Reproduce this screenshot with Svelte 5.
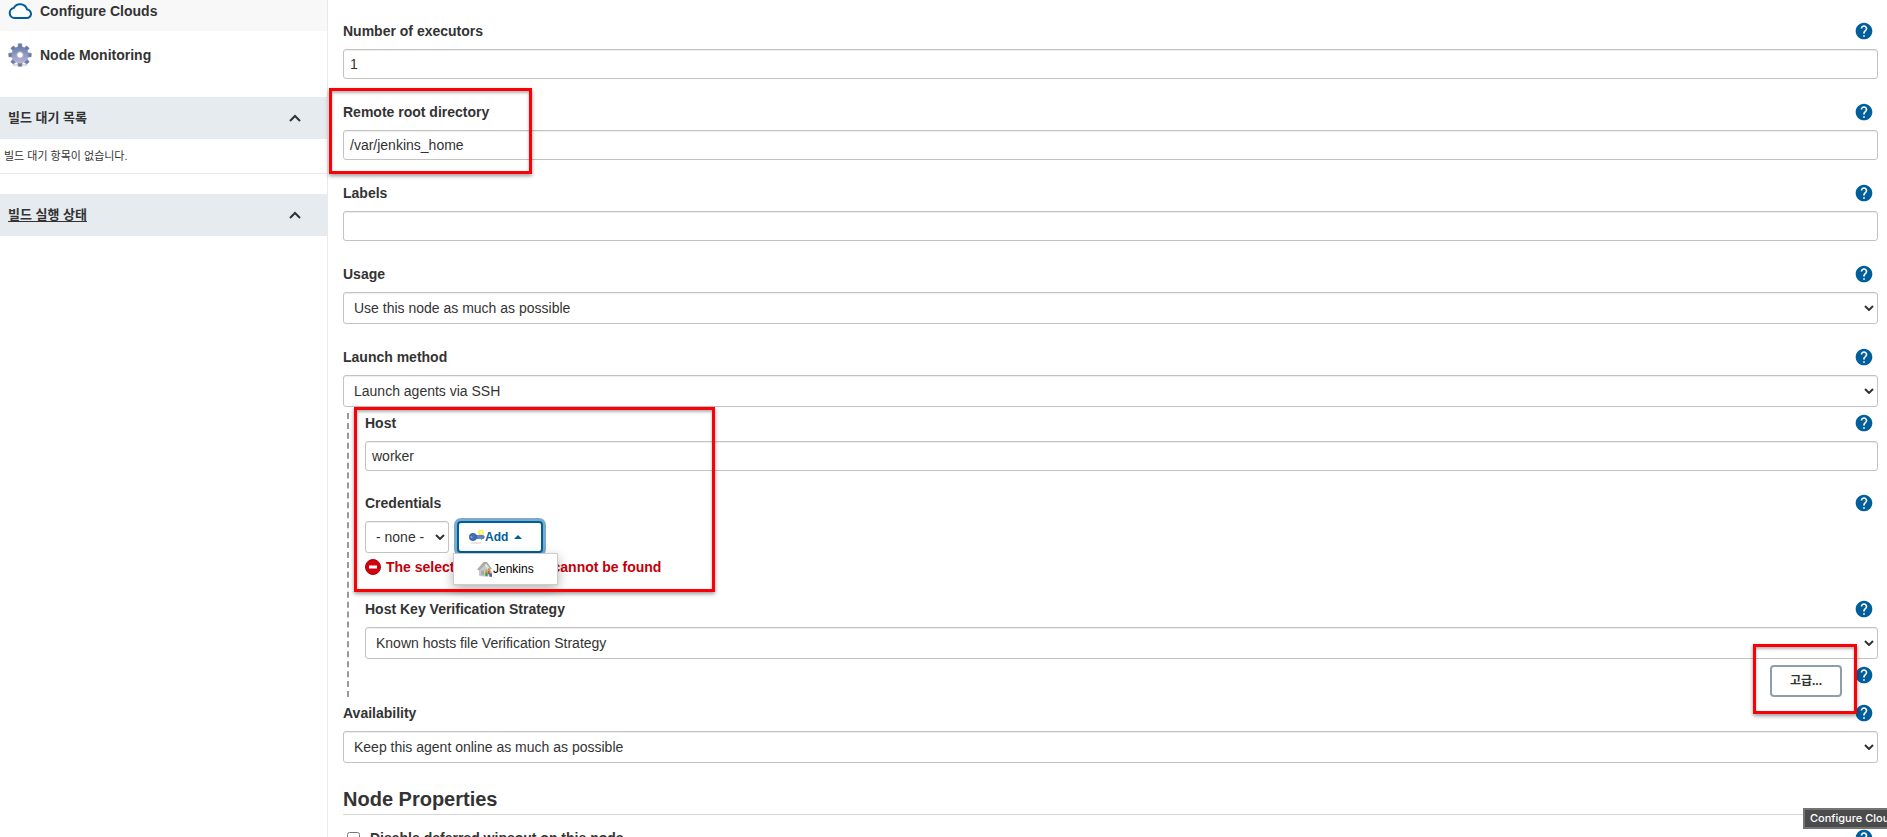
<script lang="ts">
	let executors = $state('1');
	let remoteRoot = $state('/var/jenkins_home');
	let labels = $state('');
	let usage = $state('normal');
	let launcher = $state('ssh');
	let host = $state('worker');
	let credentials = $state('none');
	let strategy = $state('known');
	let availability = $state('always');
	let disableWipeout = $state(false);
	let menuOpen = $state(true);
	let showQueue = $state(true);
	let showExecutors = $state(true);

	const teeth = [0, 45, 90, 135, 180, 225, 270, 315];
</script>

{#snippet help(name: string)}
	<button class="help" type="button" aria-label="Help for feature: {name}">
		<svg viewBox="0 0 24 24" width="20" height="20">
			<path
				fill="#005f9b"
				d="M12 2C6.48 2 2 6.48 2 12s4.48 10 10 10 10-4.48 10-10S17.52 2 12 2zm1 17h-2v-2h2v2zm2.07-7.75l-.9.92C13.45 12.9 13 13.5 13 15h-2v-.5c0-1.1.45-2.1 1.17-2.83l1.24-1.26c.37-.36.59-.86.59-1.41 0-1.1-.9-2-2-2s-2 .9-2 2H8c0-2.21 1.79-4 4-4s4 1.79 4 4c0 .88-.36 1.68-.93 2.25z"
			/>
		</svg>
	</button>
{/snippet}

{#snippet head(id: string, text: string)}
	<div class="head">
		<label for={id}>{text}</label>
		{@render help(text)}
	</div>
{/snippet}

{#snippet chevron()}
	<svg viewBox="0 0 12 8" width="12" height="8">
		<path d="M1 7l5-5 5 5" fill="none" stroke="#333" stroke-width="2" />
	</svg>
{/snippet}

<div class="page">
	<aside>
		<nav>
			<a class="task active" href="#clouds">
				<svg viewBox="0 0 24 24" width="24" height="24">
					<path
						d="M6.500 19h12a4.200 4.200 0 0 0 .6-8.400A7.200 7.200 0 0 0 5.800 9 5.050 5.050 0 0 0 6.500 19z"
						fill="#fff"
						stroke="#005f9b"
						stroke-width="2"
						stroke-linejoin="round"
					/>
				</svg>
				Configure Clouds
			</a>
			<a class="task" href="#monitoring">
				<svg viewBox="0 0 24 24" width="24" height="24">
					<defs>
						<linearGradient id="gear" x1="0" y1="0" x2="0" y2="24" gradientUnits="userSpaceOnUse">
							<stop offset="0" stop-color="#5871a5" />
							<stop offset="1" stop-color="#c9c4e0" />
						</linearGradient>
					</defs>
					<ellipse cx="12" cy="22" rx="8" ry="1.500" fill="#ddd" />
					<g fill="url(#gear)" stroke="#8583a6" stroke-width=".7">
						{#each teeth as angle (angle)}
							<path d="M9.800 6L10.300 .8h3.400L14.200 6z" transform="rotate({angle} 12 12)" />
						{/each}
					</g>
					<circle cx="12" cy="12" r="6" fill="none" stroke="url(#gear)" stroke-width="5" />
					<circle cx="12" cy="12" r="3.300" fill="#fff" stroke="#75759c" stroke-width=".7" />
				</svg>
				Node Monitoring
			</a>
		</nav>

		<section class="pane">
			<div class="pane-head">
				<span>빌드 대기 목록</span>
				<button type="button" aria-label="접기" onclick={() => (showQueue = !showQueue)}>
					{@render chevron()}
				</button>
			</div>
			{#if showQueue}
				<p>빌드 대기 항목이 없습니다.</p>
			{/if}
		</section>
		<section class="pane">
			<div class="pane-head">
				<a href="#computer">빌드 실행 상태</a>
				<button type="button" aria-label="접기" onclick={() => (showExecutors = !showExecutors)}>
					{@render chevron()}
				</button>
			</div>
		</section>
	</aside>

	<main>
		<div class="field">
			{@render head('executors', 'Number of executors')}
			<input id="executors" type="text" bind:value={executors} />
		</div>
		<div class="field">
			{@render head('remote', 'Remote root directory')}
			<input id="remote" type="text" bind:value={remoteRoot} />
			<div class="mark mark-remote"></div>
		</div>
		<div class="field">
			{@render head('labels', 'Labels')}
			<input id="labels" type="text" bind:value={labels} />
		</div>
		<div class="field">
			{@render head('usage', 'Usage')}
			<select id="usage" bind:value={usage}>
				<option value="normal">Use this node as much as possible</option>
				<option value="exclusive">Only build jobs with label expressions matching this node</option>
			</select>
		</div>
		<div class="field">
			{@render head('launcher', 'Launch method')}
			<select id="launcher" bind:value={launcher}>
				<option value="ssh">Launch agents via SSH</option>
			</select>
		</div>

		<div class="nested">
			<div class="field">
				{@render head('host', 'Host')}
				<input id="host" type="text" bind:value={host} />
				<div class="mark mark-host"></div>
			</div>
			<div class="field">
				{@render head('credentials', 'Credentials')}
				<div class="credentials">
					<select id="credentials" bind:value={credentials}>
						<option value="none">- none -</option>
					</select>
					<div class="add-wrap">
						<button class="add" type="button" onclick={() => (menuOpen = !menuOpen)}>
							<svg viewBox="0 0 16 16" width="16" height="16">
								<ellipse cx="7" cy="14" rx="6" ry="1" fill="#e4e4e4" />
								<circle cx="12" cy="3.500" r="2.800" fill="#f8ee4a" />
								<circle cx="12" cy="3.500" r="1.200" fill="#fffbc0" />
								<path d="M6 6.500h8.500l1 1.500-1 1.500h-1l-1 1-1-1H6z" fill="#5c86c8" stroke="#33589c" stroke-width=".6" />
								<circle cx="4" cy="8" r="3.700" fill="#3f6fb8" stroke="#2d5394" stroke-width=".6" />
								<circle cx="2.500" cy="8" r="1" fill="#7fa3d8" />
							</svg>
							Add
							<svg class="caret" viewBox="0 0 8 4" width="8" height="4">
								<path d="M0 4l4-4 4 4z" fill="#005f9b" />
							</svg>
						</button>
						{#if menuOpen}
							<div class="menu">
								<button type="button">
									<svg viewBox="0 0 16 16" width="16" height="16">
										<path d="M2.500 8v6.500l8 1V8L7 3z" fill="#c9c9c6" stroke="#aaa" stroke-width=".5" />
										<path d="M0 8.500L6.500 1l3.500 0 5 7-1.500.5L9 3 2 9.500z" fill="#a9aba7" />
										<path d="M9 3l5 6v5l-3.500 1.500V7z" fill="#dededb" />
										<path d="M4 9.500h3V14H4z" fill="#aaa" />
										<circle cx="9.500" cy="10" r="1.200" fill="#c99b4b" />
										<path d="M8.300 11.300h2.400V15H8.300z" fill="#4c9a3b" />
										<circle cx="12" cy="8.500" r="1.200" fill="#c88b50" />
										<path d="M11 9.800h2.300v3.400H11z" fill="#cf4b3f" />
										<circle cx="13.500" cy="11" r="1.200" fill="#e1b04d" />
										<path d="M12.300 12.300h2.700v3.500h-2.700z" fill="#3d68b4" />
									</svg>
									Jenkins
								</button>
							</div>
						{/if}
					</div>
				</div>
				<div class="error">
					<svg viewBox="0 0 16 16" width="16" height="16">
						<circle cx="8" cy="8" r="7.500" fill="#d3000d" stroke="#a9000b" />
						<path d="M4 6.500h8v3H4z" fill="#fff" />
					</svg>
					The selected credentials cannot be found
				</div>
			</div>
			<div class="field">
				{@render head('strategy', 'Host Key Verification Strategy')}
				<select id="strategy" bind:value={strategy}>
					<option value="known">Known hosts file Verification Strategy</option>
				</select>
			</div>
			<div class="advanced">
				<div class="advanced-wrap">
					<button class="advanced-button" type="button">고급...</button>
					<div class="mark mark-advanced"></div>
				</div>
				{@render help('Advanced')}
			</div>
		</div>

		<div class="field">
			{@render head('availability', 'Availability')}
			<select id="availability" bind:value={availability}>
				<option value="always">Keep this agent online as much as possible</option>
			</select>
		</div>

		<h2>Node Properties</h2>
		<div class="head property">
			<label>
				<input type="checkbox" bind:checked={disableWipeout} />
				Disable deferred wipeout on this node
			</label>
			{@render help('Disable deferred wipeout on this node')}
		</div>
	</main>

	<div class="tooltip" role="tooltip">Configure Clouds</div>
</div>

<style>
	:global(body) {
		margin: 0;
		background: #fff;
		color: #333;
		font-family: 'Liberation Sans', 'Noto Sans CJK KR', sans-serif;
		font-size: 14px;
		line-height: 20px;
	}
	.page {
		position: relative;
		display: grid;
		grid-template-columns: 328px 1fr;
		height: 100vh;
		overflow: hidden;
	}
	button,
	input,
	select {
		box-sizing: border-box;
		margin: 0;
		font: inherit;
		color: inherit;
	}
	svg {
		display: block;
		flex: none;
	}
	aside {
		margin-top: -9px;
		border-right: 1px solid #eaeaea;
		box-sizing: border-box;
	}
	nav {
		display: grid;
		gap: 4px;
		margin-bottom: 22px;
	}
	.task {
		display: flex;
		align-items: center;
		gap: 8px;
		height: 40px;
		padding-left: 8px;
		color: #333;
		font-weight: 700;
		text-decoration: none;
	}
	.task.active {
		background: #f8f8f8;
	}
	.pane {
		margin-bottom: 20px;
	}
	.pane-head {
		display: flex;
		align-items: center;
		justify-content: space-between;
		height: 42px;
		padding: 0 24px 0 8px;
		background: #e6ebef;
		font-size: 13px;
		font-weight: 700;
	}
	.pane-head a {
		color: inherit;
		text-underline-offset: 2px;
	}
	.pane-head button {
		padding: 2px;
		border: 0;
		background: none;
	}
	.pane p {
		margin: 0;
		padding: 7px 4px;
		border-bottom: 1px solid #e6ebef;
		font-size: 11px;
	}
	main {
		min-width: 0;
		padding: 21px 9px 0 15px;
	}
	.field {
		position: relative;
		margin-bottom: 23px;
	}
	.head {
		display: flex;
		align-items: center;
		justify-content: space-between;
		height: 20px;
		margin-bottom: 8px;
		padding-right: 4px;
	}
	.head label {
		font-weight: 700;
	}
	.help {
		padding: 0;
		border: 0;
		background: none;
	}
	input[type='text'],
	select {
		display: block;
		width: 100%;
		height: 30px;
		padding: 0 6px;
		border: 1px solid #c3c3c3;
		border-radius: 3px;
		background: #fff;
		box-shadow: inset 0 1px 1px #eee;
	}
	select {
		height: 32px;
		padding: 0 20px 0 10px;
		appearance: none;
		background: #fff
			url("data:image/svg+xml,%3Csvg xmlns='http://www.w3.org/2000/svg' viewBox='0 0 10 6' width='10' height='6'%3E%3Cpath d='M1 1l4 4 4-4' fill='none' stroke='%23333' stroke-width='2'/%3E%3C/svg%3E")
			no-repeat right 3px center;
	}
	.nested {
		margin: -17px 0 6px 4px;
		padding-left: 16px;
		border-left: 2px dashed #999;
	}
	.nested .field {
		margin-bottom: 22px;
	}
	.nested .field:nth-child(3) {
		margin-bottom: 6px;
	}
	.credentials {
		display: flex;
		gap: 8px;
	}
	.credentials select {
		width: 84px;
	}
	.add-wrap {
		position: relative;
	}
	.add {
		display: flex;
		align-items: center;
		height: 32px;
		width: 86px;
		padding: 0 10px;
		border: 2px solid #005f9b;
		border-radius: 4px;
		background: #fff;
		box-shadow: 0 0 0 3px #7aabca;
		color: #005f9b;
		font-size: 12px;
		font-weight: 700;
	}
	.caret {
		margin-left: 6px;
	}
	.menu {
		position: absolute;
		top: 32px;
		left: -4px;
		z-index: 1;
		width: 103px;
		border: 1px solid #ccc;
		background: #fff;
		box-shadow: 0 4px 12px rgba(0, 0, 0, 0.3);
	}
	.menu button {
		display: flex;
		align-items: center;
		height: 30px;
		padding: 0 23px;
		border: 0;
		background: none;
		color: #000;
		font-size: 12px;
	}
	.error {
		display: flex;
		align-items: center;
		gap: 5px;
		margin-top: 4px;
		color: #c4000a;
		font-weight: 700;
	}
	.advanced {
		display: flex;
		justify-content: flex-end;
		gap: 12px;
		padding-right: 4px;
	}
	.advanced-wrap {
		position: relative;
	}
	.advanced-button {
		display: block;
		width: 72px;
		height: 32px;
		padding: 0;
		border: 2px solid #8f9ea9;
		border-radius: 4px;
		background: #fff;
		font-size: 12px;
		font-weight: 700;
	}
	.advanced .help {
		height: 20px;
	}
	.mark {
		position: absolute;
		z-index: 2;
		box-sizing: border-box;
		border: 3px solid #fb0007;
		box-shadow:
			0 2px 4px rgba(0, 0, 0, 0.4),
			inset 0 2px 3px rgba(0, 0, 0, 0.3);
		pointer-events: none;
	}
	.mark-remote {
		top: -14px;
		left: -14px;
		width: 203px;
		height: 86px;
	}
	.mark-host {
		top: -6px;
		left: -11px;
		width: 361px;
		height: 185px;
	}
	.mark-advanced {
		top: -21px;
		left: -17px;
		width: 104px;
		height: 70px;
	}
	h2 {
		margin: 0 0 13px;
		padding-bottom: 1px;
		border-bottom: 1px solid #d5d5d5;
		font-size: 20px;
		line-height: 27px;
	}
	.property label {
		display: flex;
		align-items: center;
		gap: 10px;
		padding-left: 4px;
	}
	.property input {
		width: 13px;
		height: 13px;
	}
	.tooltip {
		position: absolute;
		right: 0;
		bottom: 8px;
		z-index: 3;
		box-sizing: border-box;
		width: 84px;
		height: 21px;
		padding-left: 5px;
		border: 2px solid #747474;
		border-right: 0;
		background: #4b4b4b;
		color: #fff;
		font-family: Inter, sans-serif;
		font-size: 11px;
		font-weight: 500;
		line-height: 17px;
		white-space: nowrap;
		overflow: hidden;
	}
</style>
